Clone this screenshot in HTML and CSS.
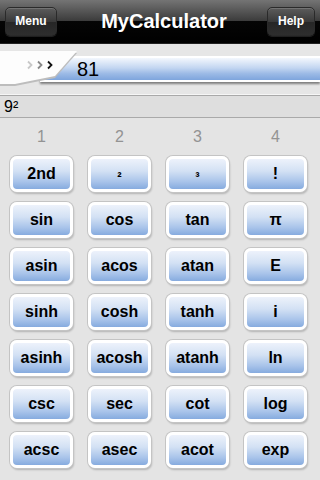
FILE: index.html
```html
<!DOCTYPE html>
<html lang="en">
<head>
  <meta charset="UTF-8" />
  <title>MyCalculator</title>
  <link rel="stylesheet" href="styles.css">
</head>
<body>
  <div id="topbar">
    <button class="bar-btn menu-btn">Menu</button>
    <div class="title">MyCalculator</div>
    <button class="bar-btn help-btn">Help</button>
  </div>

  <div class="input-row">
    <svg class="prompt-tab" width="80" height="38" viewBox="0 0 80 38">
      <polygon points="0,2 77,2 55,27 15,35 0,35" fill="#bdbdbd" transform="translate(0,1)" />
      <polygon points="0,1 77,1 55,26 15,34 0,34" fill="#fdfdfd" />
      <path d="M28,11.5 l3.5,3.5 l-3.5,3.5" fill="none" stroke="#c8c8c8" stroke-width="1.8" />
      <path d="M38,11.5 l3.5,3.5 l-3.5,3.5" fill="none" stroke="#888" stroke-width="1.8" />
      <path d="M48,11.5 l3.5,3.5 l-3.5,3.5" fill="none" stroke="#111" stroke-width="1.8" />
    </svg>
    <div class="entry">81</div>
  </div>

  <div class="history-row">9²</div>

  <div id="keypad">
    <div class="col-labels">
      <span>1</span><span>2</span><span>3</span><span>4</span>
    </div>
    <div class="keys">
      <button class="key">2nd</button>
      <button class="key small">²</button>
      <button class="key small">³</button>
      <button class="key">!</button>

      <button class="key">sin</button>
      <button class="key">cos</button>
      <button class="key">tan</button>
      <button class="key">π</button>

      <button class="key">asin</button>
      <button class="key">acos</button>
      <button class="key">atan</button>
      <button class="key">E</button>

      <button class="key">sinh</button>
      <button class="key">cosh</button>
      <button class="key">tanh</button>
      <button class="key">i</button>

      <button class="key">asinh</button>
      <button class="key">acosh</button>
      <button class="key">atanh</button>
      <button class="key">ln</button>

      <button class="key">csc</button>
      <button class="key">sec</button>
      <button class="key">cot</button>
      <button class="key">log</button>

      <button class="key">acsc</button>
      <button class="key">asec</button>
      <button class="key">acot</button>
      <button class="key">exp</button>
    </div>
  </div>
</body>
</html>
```

FILE: styles.css
```css
 body {
   margin: 0;
   width: 320px;
   height: 480px;
   overflow: hidden;
   font-family: 'Liberation Sans', Arial, sans-serif;
   background: #e4e4e4;
   color: #000;
 }

 #topbar {
   height: 44px;
   box-sizing: border-box;
   display: flex;
   align-items: center;
   justify-content: space-between;
   padding: 0 5px 1px 5px;
   background: linear-gradient(#747474 0, #3c3c3c 48%, #050505 50%, #000 100%);
   border-bottom: 1px solid #222;
 }

 .title {
   color: #fff;
   font-weight: bold;
   font-size: 20px;
   margin-left: 4px;
 }

 .bar-btn {
   height: 29px;
   padding: 0;
   border: 1px solid #2a2a2a;
   border-radius: 5px;
   background: linear-gradient(#5c5c5c, #3a3a3a 50%, #262626 52%, #2e2e2e);
   box-shadow: inset 0 1px 0 rgba(255, 255, 255, 0.15), 0 1px 0 rgba(255, 255, 255, 0.12);
   color: #fff;
   font-family: 'Liberation Sans', Arial, sans-serif;
   font-weight: bold;
   font-size: 12px;
 }

 .menu-btn {
   width: 52px;
 }

 .help-btn {
   width: 48px;
 }

 /* Entry line */
 .input-row {
   position: relative;
   height: 51px;
   box-sizing: border-box;
   padding-top: 12px;
   background: #e6e6e6;
   border-bottom: 1px solid #f6f6f6;
 }

 .prompt-tab {
   position: absolute;
   top: 6px;
   left: 0;
 }

 .entry {
   margin-left: 40px;
   height: 22px;
   padding-left: 37px;
   border-top: 2px solid #fff;
   border-bottom: 2px solid #fff;
   background: linear-gradient(#f3f7fd, #c3d6f1 45%, #9dbbe6 70%, #7ea5dd);
   box-shadow: 0 2px 2px rgba(0, 0, 0, 0.45);
   font-size: 20px;
   line-height: 23px;
 }

 .history-row {
   height: 21px;
   border-top: 1px solid #a9a9a9;
   border-bottom: 1px solid #a9a9a9;
   background: #dedede;
   padding-left: 4px;
   font-size: 16px;
   line-height: 22px;
 }

 /* Keypad */
 #keypad {
   padding: 0 10px;
 }

 .col-labels,
 .keys {
   display: grid;
   grid-template-columns: repeat(4, 63px);
   column-gap: 15px;
 }

 .col-labels {
   height: 38px;
   line-height: 38px;
   text-align: center;
   color: #939393;
   font-size: 16px;
 }

 .keys {
   row-gap: 10px;
 }

 .key {
   height: 36px;
   padding: 0;
   border: 3px solid #fff;
   border-radius: 7px;
   background: linear-gradient(#edf2fb, #d3e1f4 40%, #a9c4ea 75%, #86abdf);
   box-shadow: 0 0 0 1px #c4c4c4, 1px 2px 2px rgba(0, 0, 0, 0.22);
   color: #000;
   font-family: 'Liberation Sans', Arial, sans-serif;
   font-weight: bold;
   font-size: 16px;
 }

 .key.small {
   font-size: 13px;
   padding-top: 4px;
 }
```
